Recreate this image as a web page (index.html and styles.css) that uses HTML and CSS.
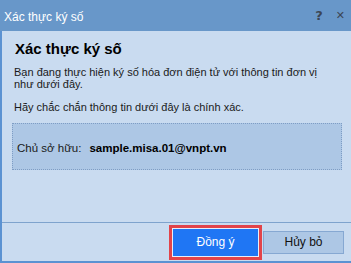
FILE: index.html
```html
<!DOCTYPE html>
<html>
<head>
<meta charset="utf-8">
<link rel="stylesheet" href="styles.css">
</head>
<body>
<div class="window">
  <div class="titlebar">
    <span class="title">Xác thực ký số</span>
    <span class="tb-btn help">?</span>
    <span class="tb-btn close">✕</span>
  </div>
  <div class="body">
    <div class="main">
      <h1 class="heading">Xác thực ký số</h1>
      <p class="text">Bạn đang thực hiện ký số hóa đơn điện tử với thông tin đơn vị như dưới đây.</p>
      <p class="text second">Hãy chắc chắn thông tin dưới đây là chính xác.</p>
      <div class="infobox">
        <span class="label">Chủ sở hữu:</span>
        <span class="value">sample.misa.01@vnpt.vn</span>
      </div>
    </div>
    <div class="footer">
      <div class="focus-ring"><button class="btn primary">Đồng ý</button></div>
      <button class="btn secondary">Hủy bỏ</button>
    </div>
  </div>
</div>
</body>
</html>
```
FILE: styles.css
```css
html, body {
  margin: 0;
  padding: 0;
}
body {
  width: 351px;
  height: 263px;
  overflow: hidden;
  font-family: "Liberation Sans", Arial, sans-serif;
  font-size: 12px;
  color: #111;
}
.window {
  width: 351px;
  height: 263px;
  display: flex;
  flex-direction: column;
}
.titlebar {
  height: 31px;
  flex: none;
  background: #6897c9;
  display: flex;
  align-items: center;
  padding: 0 6px 0 4px;
  box-sizing: border-box;
  color: #ffffff;
}
.title {
  flex: 1;
  font-size: 12px;
  padding-top: 2px;
}
.tb-btn {
  color: #3c4654;
  font-weight: bold;
  font-size: 13px;
  font-family: "DejaVu Sans", sans-serif;
}
.help {
  margin-right: 13px;
}
.close {
  font-size: 11px;
}
.body {
  flex: 1;
  background: #c9dbf0;
  border-left: 2px solid #5b92d2;
  border-bottom: 2px solid #5b92d2;
  display: flex;
  flex-direction: column;
}
.main {
  flex: 1;
  padding: 8px 8px 0 12px;
}
.heading {
  margin: 0;
  font-size: 15px;
  font-weight: bold;
  line-height: 20px;
  padding-left: 1px;
  color: #000;
}
.text {
  margin: 7px 0 0 0;
  font-size: 11px;
  line-height: 12px;
  width: 318px;
  color: #1a1a1a;
}
.second {
  margin-top: 11px;
}
.infobox {
  margin-top: 10px;
  width: 330px;
  height: 47px;
  box-sizing: border-box;
  margin-left: -2px;
  background: #adc7e5;
  border: 1px dotted #7f9dc4;
  display: flex;
  align-items: center;
  padding: 2px 0 0 4px;
}
.label {
  font-size: 11.5px;
  color: #1a1a1a;
}
.value {
  margin-left: 8px;
  font-weight: bold;
  font-size: 11.5px;
  color: #000;
}
.footer {
  height: 38px;
  flex: none;
  border-top: 1px solid #7ea3cd;
  display: flex;
  justify-content: flex-end;
  align-items: center;
  padding: 0 7px 0 0;
}
.focus-ring {
  border: 3px solid #e2444a;
  padding: 1px;
  background: #e6eefa;
  display: flex;
  margin-right: 1px;
}
.btn {
  font-family: "Liberation Sans", Arial, sans-serif;
  font-size: 12px;
  margin: 0;
  cursor: default;
}
.primary {
  width: 85px;
  height: 27px;
  background: #1f76f4;
  color: #ffffff;
  border: none;
}
.secondary {
  width: 81px;
  height: 23px;
  background: #adc7e5;
  color: #111;
  border: 1px solid #86a8d2;
}
```
